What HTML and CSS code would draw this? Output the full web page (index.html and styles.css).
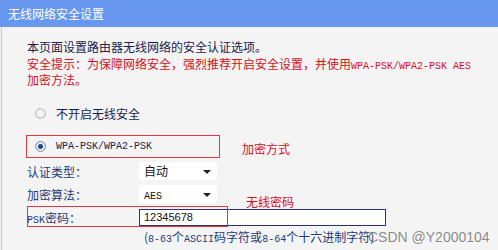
FILE: index.html
```html
<!DOCTYPE html>
<html lang="zh-CN">
<head>
    <meta charset="UTF-8">
    <title>无线网络安全设置</title>
    <link rel="stylesheet" href="styles.css">
</head>
<body>
    <div class="titlebar">无线网络安全设置</div>

    <div class="content">
        <p class="intro">本页面设置路由器无线网络的安全认证选项。</p>
        <p class="warn">安全提示：为保障网络安全，强烈推荐开启安全设置，并使用<span class="mono">WPA-PSK/WPA2-PSK AES</span><br>加密方法。</p>

        <div class="radio-row first">
            <span class="radio"></span>
            <span>不开启无线安全</span>
        </div>

        <div class="radio-row marked">
            <span class="radio checked"></span>
            <span class="mono">WPA-PSK/WPA2-PSK</span>
        </div>

        <div class="form-row">
            <span class="label">认证类型：</span>
            <span class="select">自动<i class="caret"></i></span>
        </div>
        <div class="form-row">
            <span class="label">加密算法：</span>
            <span class="select"><span class="mono">AES</span><i class="caret"></i></span>
        </div>
        <div class="form-row">
            <span class="label"><span class="mono">PSK</span>密码：</span>
            <span class="text-input">12345678</span>
        </div>
        <div class="hint">(<span class="mono">8-63</span>个<span class="mono">ASCII</span>码字符或<span class="mono">8-64</span>个十六进制字符)</div>

        <!-- annotations drawn over the screenshot -->
        <div class="note note-method">加密方式</div>
        <div class="note note-pass">无线密码</div>
        <div class="mark-box"></div>
        <div class="watermark">CSDN @Y2000104</div>
    </div>
</body>
</html>
```

FILE: styles.css
```css
body {
    margin: 0;
    background-color: #f4f4f4;
    font-family: "Noto Sans CJK SC", "DejaVu Sans", sans-serif;
    font-size: 12px;
    color: #1c1c4a;
    width: 498px;
    height: 250px;
    overflow: hidden;
}

.titlebar {
    height: 27px;
    line-height: 28px;
    padding-left: 8px;
    background-color: #6797ee;
    color: #fff;
    font-size: 12px;
}

.content {
    position: relative;
    height: 223px;
    margin-left: 1px;
    border-left: 1px solid #e2c497;
    padding: 12px 0 0 25px;
    box-sizing: border-box;
}

.mono {
    font-family: "Liberation Mono", monospace;
    font-size: 10px;
    line-height: 1;
}

p {
    margin: 0;
    line-height: 16px;
}

.warn {
    color: #d3121c;
    margin-top: 1px;
}

.radio-row {
    display: flex;
    align-items: center;
    gap: 10px;
    height: 21px;
    padding-left: 8px;
}

.radio-row.first {
    margin-top: 15px;
}

.radio-row.marked {
    margin-top: 11px;
    width: 184px;
    margin-left: -1px;
    border: 1px solid #e0383e;
}

.radio {
    width: 9px;
    height: 9px;
    border-radius: 50%;
    border: 1px solid #bbb;
    background: radial-gradient(circle, #fff 0, #dcdcdc 100%);
}

.radio.checked {
    border-color: #7d8ea8;
    background: radial-gradient(circle, #1d3f74 0, #2c5b9a 35%, #e8eef6 45%, #d6dde6 100%);
}

.form-row {
    display: grid;
    grid-template-columns: 112px auto;
    align-items: center;
    height: 20px;
    margin-top: 3px;
    color: #1f3a78;
}

.select {
    position: relative;
    width: 73px;
    height: 18px;
    line-height: 18px;
    padding-left: 5px;
    background-color: #fff;
    color: #111;
}

.caret {
    position: absolute;
    right: 6px;
    top: 8px;
    border-left: 4px solid transparent;
    border-right: 4px solid transparent;
    border-top: 4px solid #222;
}

.text-input {
    width: 241px;
    height: 15px;
    line-height: 15px;
    padding-left: 4px;
    border: 1px solid #2c3170;
    background-color: #fff;
    color: #111;
    font-family: "Liberation Sans", sans-serif;
    font-size: 11px;
}

.hint {
    margin: 2px 0 0 117px;
    line-height: 16px;
    color: #1f3a78;
}

.note {
    position: absolute;
    color: #d3121c;
    font-size: 12px;
}

.note-method {
    left: 240px;
    top: 113px;
}

.note-pass {
    left: 244px;
    top: 166px;
}

.mark-box {
    position: absolute;
    left: 25px;
    top: 179px;
    width: 199px;
    height: 19px;
    border: 1px solid #e0383e;
}

.watermark {
    position: absolute;
    left: 366px;
    top: 202px;
    color: rgba(90, 90, 90, 0.7);
    font-family: "Liberation Sans", sans-serif;
    font-size: 14px;
}
```
